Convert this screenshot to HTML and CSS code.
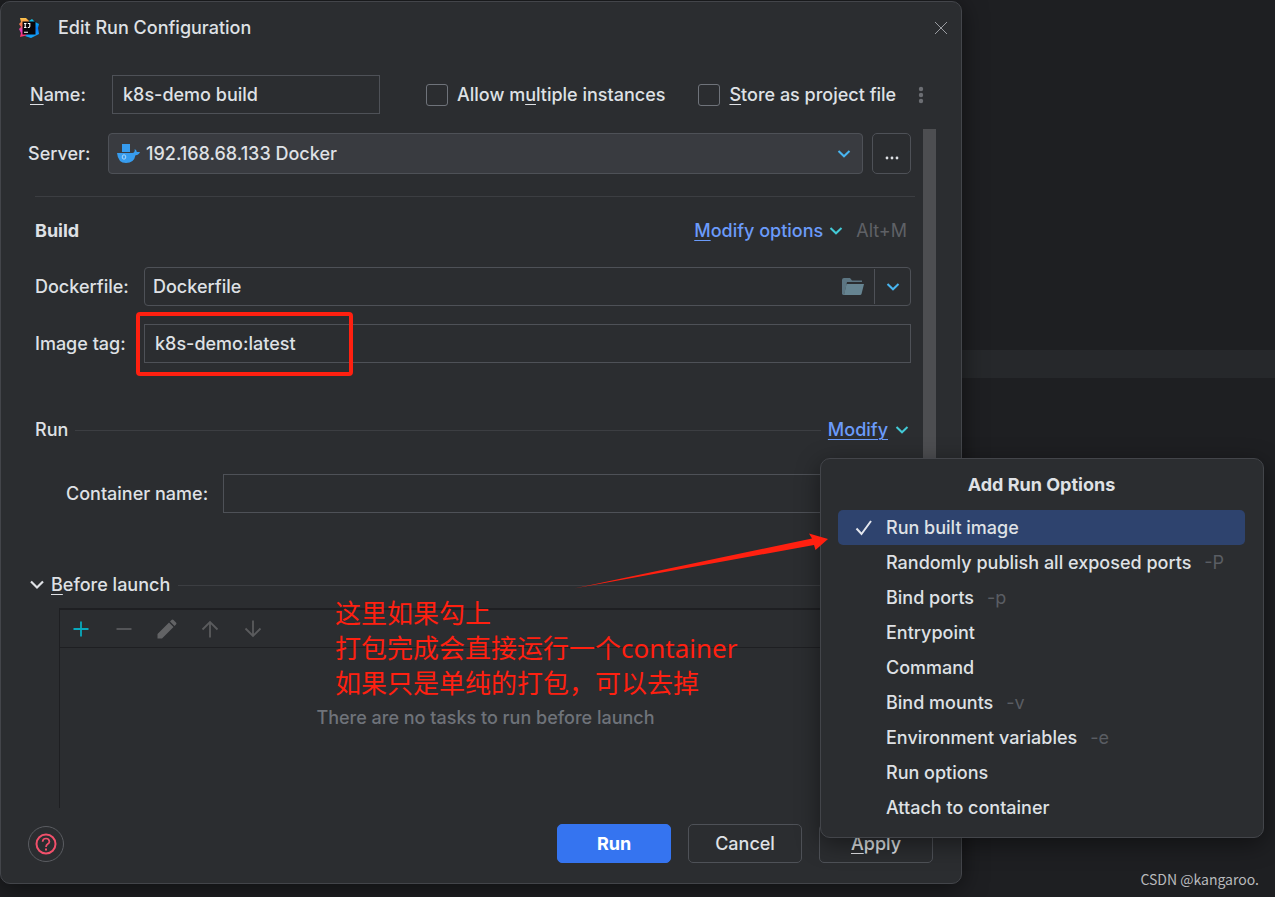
FILE: index.html
```html
<!DOCTYPE html>
<html lang="en">
<head>
<meta charset="utf-8">
<title>Edit Run Configuration</title>
<link rel="stylesheet" href="styles.css">
</head>
<body>
<div class="desktop">
  <div class="editor-line"></div>
  <form class="dialog">
    <header class="titlebar">
      <svg class="app-icon" width="20" height="20" viewBox="0 0 20 20">
        <defs>
          <linearGradient id="warm" x1="0" y1="0" x2="0" y2="1"><stop offset="0" stop-color="#fcc84a"/><stop offset=".4" stop-color="#f36a4c"/><stop offset=".65" stop-color="#e43ac0"/><stop offset="1" stop-color="#fe315d"/></linearGradient>
          <linearGradient id="cool" x1="0" y1="0" x2="0" y2="1"><stop offset="0" stop-color="#12c9e8"/><stop offset=".5" stop-color="#087cfa"/><stop offset="1" stop-color="#15a9f5"/></linearGradient>
        </defs>
        <path d="M1 0h6l4 4v13l-6 1-4 1 1-4-2-4 2-2-2-3 2-2z" fill="url(#warm)"/>
        <path d="M10 3l3-2 3 3 4 2-1 4 1 6-4 2-4 2-6-2 4-3z" fill="url(#cool)"/>
        <path d="M3.500 3.500h13v13h-13z" fill="#08060a"/>
        <path d="M5 5.500h2.500M6.200 5.500v4M5 9.500h2.500M8.800 5.500h2v2.800q0 1.300-2 1.200M5 14.200h4" stroke="#fff" stroke-width="1.100" fill="none"/>
      </svg>
      <h1 class="title">Edit Run Configuration</h1>
      <button class="icon-btn close" type="button" aria-label="Close"><svg width="14" height="14" viewBox="0 0 14 14"><path d="M1 1l12 12M13 1L1 13" stroke="#9a9ca1" stroke-width="1"/></svg></button>
    </header>

    <div class="name-row">
      <label class="name-label" for="name"><u>N</u>ame:</label>
      <input class="field name-input" id="name" type="text" value="k8s-demo build">
      <div class="checks">
        <label class="check"><input type="checkbox"><span>Allow m<u>u</u>ltiple instances</span></label>
        <label class="check"><input type="checkbox"><span><u>S</u>tore as project file</span></label>
        <button class="icon-btn" type="button" aria-label="More"><svg width="6" height="18" viewBox="0 0 6 18" fill="#6c6e73"><circle cx="3" cy="3" r="2.200"/><circle cx="3" cy="9" r="2.200"/><circle cx="3" cy="15" r="2.200"/></svg></button>
      </div>
    </div>

    <div class="body">
      <div class="content">
        <div class="server-row">
          <label class="server-label" for="server">Server:</label>
          <div class="select-box">
            <select id="server"><option>192.168.68.133 Docker</option></select>
            <svg class="docker" width="24" height="20" viewBox="0 0 24 20"><path d="M6 0h8v8H6zM1 9h15.500q1.800 0 2.200-2V5q2 1 2.100 3h3.200q-1 3-4.500 3.200Q18 19 10 19T1 9z" fill="#379cee"/><ellipse cx="8" cy="13" rx="1.800" ry="2.200" fill="none" stroke="#a9d6fa"/></svg>
            <svg class="chevron-blue" width="14" height="10" viewBox="0 0 14 10"><path d="M1.500 2L7 7.300 12.500 2" fill="none" stroke="#48b5f0" stroke-width="2"/></svg>
          </div>
          <button class="more-btn" type="button" aria-label="Browse servers"><svg width="14" height="4" viewBox="0 0 14 4" fill="#dfe1e5"><circle cx="2" cy="2" r="1.400"/><circle cx="7" cy="2" r="1.400"/><circle cx="12" cy="2" r="1.400"/></svg></button>
        </div>
        <hr class="separator">
        <div class="build-row">
          <h2 class="section-title">Build</h2>
          <a class="link" href="#"><u>M</u>odify options</a>
          <svg class="link-chevron" width="14" height="10" viewBox="0 0 14 10"><path d="M1.500 2L7 7.300 12.500 2" fill="none" stroke="#43cad6" stroke-width="2"/></svg>
          <span class="shortcut">Alt+M</span>
        </div>
        <div class="build-grid">
          <label for="dockerfile">Dockerfile:</label>
          <div class="combo">
            <input id="dockerfile" type="text" value="Dockerfile">
            <button class="icon-btn" type="button" aria-label="Browse"><svg width="22" height="18" viewBox="0 0 22 18"><path d="M0 2q0-2 2-2h6l2 2.500h10V4H5L2.500 15.500V17H1l-1-1z" fill="#5c7582"/><path d="M4.500 6H22l-2.500 10q-.3 1-1.500 1H2z" fill="#668491"/></svg></button>
            <button class="combo-arrow" type="button" aria-label="Show list"><svg width="14" height="10" viewBox="0 0 14 10"><path d="M1.500 2L7 7.300 12.500 2" fill="none" stroke="#48b5f0" stroke-width="2"/></svg></button>
          </div>
          <label for="tag">Image tag:</label>
          <input class="field" id="tag" type="text" value="k8s-demo:latest">
        </div>
        <div class="run-row">
          <h2 class="group-title">Run</h2>
          <span class="rule"></span>
          <a class="link underlined" href="#">Modify</a>
          <svg width="14" height="10" viewBox="0 0 14 10"><path d="M1.500 2L7 7.300 12.500 2" fill="none" stroke="#43cad6" stroke-width="2"/></svg>
        </div>
        <div class="container-row">
          <label for="container">Container name:</label>
          <input class="field" id="container" type="text">
        </div>
        <div class="before-row">
          <button class="disclosure" type="button"><svg width="14" height="10" viewBox="0 0 14 10"><path d="M1 1.500L7 7.500 13 1.500" fill="none" stroke="#dfe1e5" stroke-width="2.200"/></svg><span><u>B</u>efore launch</span></button>
          <span class="rule"></span>
        </div>
        <section class="tasks">
          <div class="toolbar">
            <button class="icon-btn" type="button" aria-label="Add"><svg width="20" height="20" viewBox="0 0 20 20"><path d="M10 2.500v15M2.500 10h15" stroke="#08a9bd" stroke-width="1.800"/></svg></button>
            <button class="icon-btn" type="button" aria-label="Remove"><svg width="20" height="20" viewBox="0 0 20 20"><path d="M2.500 10h15" stroke="#5a5b5d" stroke-width="1.800"/></svg></button>
            <button class="icon-btn" type="button" aria-label="Edit"><svg width="20" height="20" viewBox="0 0 20 20" fill="#626365"><path d="M.5 15L12 3.500 16.500 8 5 19.500H.5zM13 2.500L14.500 1q1-1 2 0L19 3.500q1 1 0 2L17.500 7z"/></svg></button>
            <button class="icon-btn" type="button" aria-label="Move up"><svg width="20" height="20" viewBox="0 0 20 20"><path d="M10 18.500V3M2.500 10.500L10 3l7.500 7.500" fill="none" stroke="#5a5b5d" stroke-width="1.800"/></svg></button>
            <button class="icon-btn" type="button" aria-label="Move down"><svg width="20" height="20" viewBox="0 0 20 20"><path d="M10 1.500V17M2.500 9.500L10 17l7.500-7.500" fill="none" stroke="#5a5b5d" stroke-width="1.800"/></svg></button>
          </div>
          <p class="empty">There are no tasks to run before launch</p>
        </section>
      </div>
      <div class="scrollbar"></div>
    </div>

    <footer class="footer">
      <button class="help" type="button" aria-label="Help"><svg width="22" height="22" viewBox="0 0 22 22" fill="none" stroke="#f2506b"><circle cx="11" cy="11" r="9.500" stroke-width="2"/><path d="M7.600 8.700Q7.800 5.500 11 5.500T14.400 8.600Q14.300 10 12.700 11T11 14" stroke-width="1.700"/><path d="M11 15.500v2" stroke-width="2"/></svg></button>
      <button class="btn primary" type="button">Run</button>
      <button class="btn" type="button">Cancel</button>
      <button class="btn" type="button"><span><u>A</u>pply</span></button>
    </footer>
  </form>

  <section class="popup">
    <h2 class="popup-title">Add Run Options</h2>
    <ul class="menu">
      <li><button class="item selected" type="button"><svg width="18" height="18" viewBox="0 0 18 18"><path d="M1.500 9.500L6.500 15 16 2" fill="none" stroke="#e4e7ee" stroke-width="2"/></svg><span>Run built image</span></button></li>
      <li><button class="item" type="button"><span>Randomly publish all exposed ports</span><span class="flag">-P</span></button></li>
      <li><button class="item" type="button"><span>Bind ports</span><span class="flag">-p</span></button></li>
      <li><button class="item" type="button"><span>Entrypoint</span></button></li>
      <li><button class="item" type="button"><span>Command</span></button></li>
      <li><button class="item" type="button"><span>Bind mounts</span><span class="flag">-v</span></button></li>
      <li><button class="item" type="button"><span>Environment variables</span><span class="flag">-e</span></button></li>
      <li><button class="item" type="button"><span>Run options</span></button></li>
      <li><button class="item" type="button"><span>Attach to container</span></button></li>
    </ul>
  </section>

  <div class="mark-box"></div>
  <svg class="mark-arrow" width="260" height="60" viewBox="0 0 260 60"><path d="M4 58.500L242 8.500 239 3.500 258 9 245.500 20 244 15z" fill="#ff2010"/></svg>
  <p class="mark-note">这里如果勾上<br>打包完成会直接运行一个container<br>如果只是单纯的打包，可以去掉</p>
  <span class="watermark">CSDN @kangaroo.</span>
</div>
</body>
</html>
```
FILE: styles.css
```css
* { box-sizing: border-box; }
body {
  margin: 0;
  background: #1a1b1d;
  color: #dfe1e5;
  font: 500 18px/24px Inter, "Noto Sans", sans-serif;
}
h1, h2, p, ul { margin: 0; padding: 0; font: inherit; }
ul { list-style: none; }
button, input, select { font: inherit; color: inherit; margin: 0; }
button { padding: 0; border: 0; background: none; }
svg { display: block; flex: none; }
u { text-decoration-thickness: 1px; text-underline-offset: 3px; }

.desktop {
  position: relative;
  min-height: 100vh;
  padding: 1px 313px 13px 0;
  overflow: hidden;
  background: #1e1f22;
}
.editor-line {
  position: absolute;
  top: 350px;
  right: 0;
  left: 0;
  height: 28px;
  background: #26282b;
}
.dialog {
  position: relative;
  border: 1px solid #43454a;
  border-radius: 10px;
  background: #2b2d30;
  box-shadow: 0 4px 24px rgba(0, 0, 0, .5);
}
.icon-btn { display: flex; align-items: center; justify-content: center; }

.titlebar { display: flex; align-items: center; height: 52px; padding: 0 13px 0 18px; }
.title { flex: 1; margin-left: 19px; }

.name-row { display: flex; align-items: center; margin-top: 21px; padding: 0 37px 0 29px; }
.name-label { flex: none; width: 82px; }
.field {
  width: 100%;
  height: 39px;
  padding: 0 10px;
  border: 1px solid #4e5157;
  border-radius: 0;
  background: transparent;
  outline: 0;
}
.name-input { flex: none; width: 268px; }
.checks { display: flex; flex: 1; align-items: center; margin-left: 46px; }
.check { display: flex; align-items: center; gap: 9px; white-space: nowrap; }
.check + .check { margin-left: 33px; }
.check input {
  appearance: none;
  width: 22px;
  height: 22px;
  border: 1px solid #6f737a;
  border-radius: 3px;
}
.checks .icon-btn { margin-left: auto; }

.body { display: flex; gap: 8px; margin-top: 15px; padding-right: 25px; }
.content { flex: 1; min-width: 0; padding-top: 4px; }
.scrollbar { width: 13px; background: #4d4e51; }

.server-row { display: flex; align-items: center; padding: 0 4px 0 27px; }
.server-label { width: 80px; }
.select-box { display: grid; flex: 1; align-items: center; }
.select-box > * { grid-area: 1 / 1; }
.select-box select {
  appearance: none;
  height: 41px;
  padding: 0 37px;
  border: 1px solid #4e5157;
  border-radius: 4px;
  background: #393b40;
}
.docker { margin-left: 8px; }
.chevron-blue { justify-self: end; margin-right: 12px; }
.more-btn {
  display: flex;
  align-items: center;
  justify-content: center;
  width: 39px;
  height: 41px;
  margin-left: 9px;
  padding-top: 8px;
  border: 1px solid #4e5157;
  border-radius: 5px;
}
.separator { height: 1px; margin: 22px 0 0 34px; border: 0; background: #3c3e42; }

.build-row { display: flex; align-items: center; margin-top: 22px; padding: 0 8px 0 34px; }
.section-title { flex: 1; font-weight: 700; }
.link { color: #6b9bfa; text-decoration: none; }
.underlined { text-decoration: underline; text-decoration-thickness: 1px; text-underline-offset: 3px; }
.link-chevron { margin: 0 13px 0 6px; }
.shortcut { color: #5f6166; font-weight: 400; }

.build-grid {
  display: grid;
  grid-template-columns: 109px 1fr;
  align-items: center;
  row-gap: 18px;
  margin-top: 24px;
  padding: 0 4px 0 34px;
}
.combo {
  display: flex;
  align-items: center;
  height: 39px;
  border: 1px solid #4e5157;
  border-radius: 4px;
}
.combo input { flex: 1; min-width: 0; padding: 0 8px; border: 0; background: none; outline: 0; }
.combo-arrow {
  display: flex;
  align-items: center;
  justify-content: center;
  width: 36px;
  height: 35px;
  margin-left: 10px;
  border-left: 1px solid #4e5157;
}

.rule { flex: 1; height: 1px; background: #3c3e42; }
.run-row { display: flex; align-items: center; gap: 7px; margin-top: 55px; padding: 0 6px 0 34px; }
.container-row { display: grid; grid-template-columns: 157px 1fr; align-items: center; margin-top: 32px; padding: 0 4px 0 65px; }
.before-row { display: flex; align-items: center; gap: 8px; margin-top: 60px; padding: 0 4px 0 29px; }
.disclosure { display: flex; align-items: center; gap: 7px; }

.tasks { margin: 11px 4px 0 58px; border: 1px solid #1e1f22; border-width: 2px 0 0 1px; }
.toolbar { display: flex; align-items: center; gap: 23px; height: 38px; padding-left: 11px; border-bottom: 1px solid #1e1f22; }
.empty { padding: 58px 0 78px; color: #6f737a; text-align: center; }

.footer { display: flex; align-items: center; gap: 17px; padding: 16px 28px 20px 27px; }
.help {
  display: flex;
  align-items: center;
  justify-content: center;
  width: 36px;
  height: 36px;
  margin-right: auto;
  border: 1px solid #5a5c61;
  border-radius: 50%;
}
.btn { width: 114px; height: 39px; border: 1px solid #4e5157; border-radius: 5px; }
.primary { border-color: #3574f0; background: #3574f0; color: #fff; font-weight: 700; }

.popup {
  position: absolute;
  top: 458px;
  right: 11px;
  width: 444px;
  padding: 14px 18px 12px 17px;
  border: 1px solid #43454a;
  border-radius: 10px;
  background: #2b2d30;
  box-shadow: 0 6px 24px rgba(0, 0, 0, .45);
}
.popup-title { margin-bottom: 13px; font-weight: 700; text-align: center; }
.item {
  display: flex;
  align-items: center;
  gap: 13px;
  width: 100%;
  height: 35px;
  padding-left: 48px;
  white-space: nowrap;
}
.selected { padding-left: 17px; border-radius: 5px; background: #2e436e; }
.flag { color: #5a5d63; font-weight: 400; }

.mark-box {
  position: absolute;
  top: 312px;
  left: 136px;
  width: 217px;
  height: 64px;
  border: 4px solid #ff2010;
  border-radius: 4px;
}
.mark-arrow { position: absolute; top: 530px; left: 570px; }
.mark-note {
  position: absolute;
  top: 596px;
  left: 335px;
  color: #ff2010;
  font: 26px/35px "Noto Sans", "Noto Sans CJK SC", sans-serif;
  white-space: nowrap;
}
.watermark {
  position: absolute;
  right: 16px;
  bottom: 8px;
  color: #b9babd;
  font: 14px/20px "Noto Sans CJK SC", sans-serif;
}
```
